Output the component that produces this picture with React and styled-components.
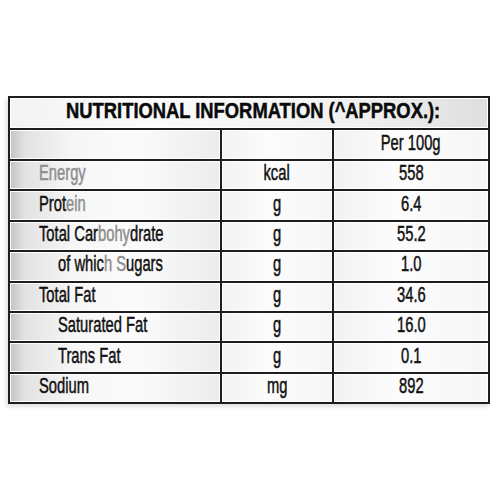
import React from "react";
import styled, { createGlobalStyle } from "styled-components";

const Global = createGlobalStyle`
  html, body { margin: 0; padding: 0; background: #fff; }
  body { font-family: "Liberation Sans", Arial, sans-serif; }
`;

const Page = styled.div`
  width: 500px;
  height: 500px;
  padding: 96px 0 0 8px;
  box-sizing: border-box;
  background: #fff;
`;

const Table = styled.div`
  display: grid;
  grid-template-columns: 210px 110px 154px;
  grid-template-rows: 30px 29px repeat(8, 28.4px);
  gap: 2px;
  padding: 2px;
  width: fit-content;
  background: #1d1d1d;
  box-shadow: -2px 3px 4px rgba(0, 0, 0, 0.12);
`;

const Title = styled.div`
  grid-column: 1 / -1;
  display: flex;
  align-items: center;
  justify-content: center;
  padding-left: 8px;
  padding-bottom: 3px;
  box-sizing: border-box;
  overflow: hidden;
  background: linear-gradient(90deg, #f3f3f3 0%, #fbfbfb 30%, #f0f0f0 75%, #dedede 100%);
  box-shadow: inset 0 0 0 1px #fff;
`;

const TitleText = styled.span`
  display: inline-block;
  white-space: nowrap;
  font-weight: 700;
  font-size: 22.4px;
  line-height: 1;
  color: #0a0a0a;
  -webkit-text-stroke: 0.5px #0a0a0a;
  transform: scaleX(0.82);
`;

const Cell = styled.div`
  display: flex;
  align-items: center;
  justify-content: ${(p) => (p.$center ? "center" : "flex-start")};
  padding-left: ${(p) => (p.$center ? 0 : p.$indent ? 48 : 29)}px;
  padding-bottom: 4px;
  box-sizing: border-box;
  overflow: hidden;
  background: ${(p) =>
    p.$label
      ? "linear-gradient(90deg, #c2c2c2 0%, #e2e2e2 7%, #f6f6f6 30%, #fbfbfb 60%, #ececec 100%)"
      : "linear-gradient(90deg, #f2f2f2 0%, #fcfcfc 40%, #f6f6f6 100%)"};
  box-shadow: inset 0 0 0 1px rgba(255, 255, 255, 0.95);
`;

const Text = styled.span`
  display: inline-block;
  font-size: 22px;
  line-height: 1;
  white-space: nowrap;
  color: #111;
  -webkit-text-stroke: 0.5px #111;
  transform: scaleX(0.67);
  transform-origin: ${(p) => (p.$center ? "center" : "left")} center;
`;

const Faint = styled.span`
  color: #8e8e8e;
  -webkit-text-stroke-color: #8e8e8e;
`;

const rows = [
  { name: [["Energy", true]], unit: "kcal", value: "558" },
  { name: [["Prot"], ["ein", true]], unit: "g", value: "6.4" },
  { name: [["Total Car"], ["bohy", true], ["drate"]], unit: "g", value: "55.2" },
  { name: [["of whic"], ["h S", true], ["ugars"]], unit: "g", value: "1.0", indent: true },
  { name: [["Total Fat"]], unit: "g", value: "34.6" },
  { name: [["Saturated Fat"]], unit: "g", value: "16.0", indent: true },
  { name: [["Trans Fat"]], unit: "g", value: "0.1", indent: true },
  { name: [["Sodium"]], unit: "mg", value: "892" },
];

export default function App() {
  return (
    <>
      <Global />
      <Page>
        <Table>
          <Title>
            <TitleText>NUTRITIONAL INFORMATION (^APPROX.):</TitleText>
          </Title>
          <Cell $label />
          <Cell $center />
          <Cell $center>
            <Text $center>Per 100g</Text>
          </Cell>
          {rows.map((r) => (
            <React.Fragment key={r.value}>
              <Cell $label $indent={r.indent}>
                <Text>
                  {r.name.map(([t, faint], i) =>
                    faint ? <Faint key={i}>{t}</Faint> : <React.Fragment key={i}>{t}</React.Fragment>
                  )}
                </Text>
              </Cell>
              <Cell $center>
                <Text $center>{r.unit}</Text>
              </Cell>
              <Cell $center>
                <Text $center>{r.value}</Text>
              </Cell>
            </React.Fragment>
          ))}
        </Table>
      </Page>
    </>
  );
}
